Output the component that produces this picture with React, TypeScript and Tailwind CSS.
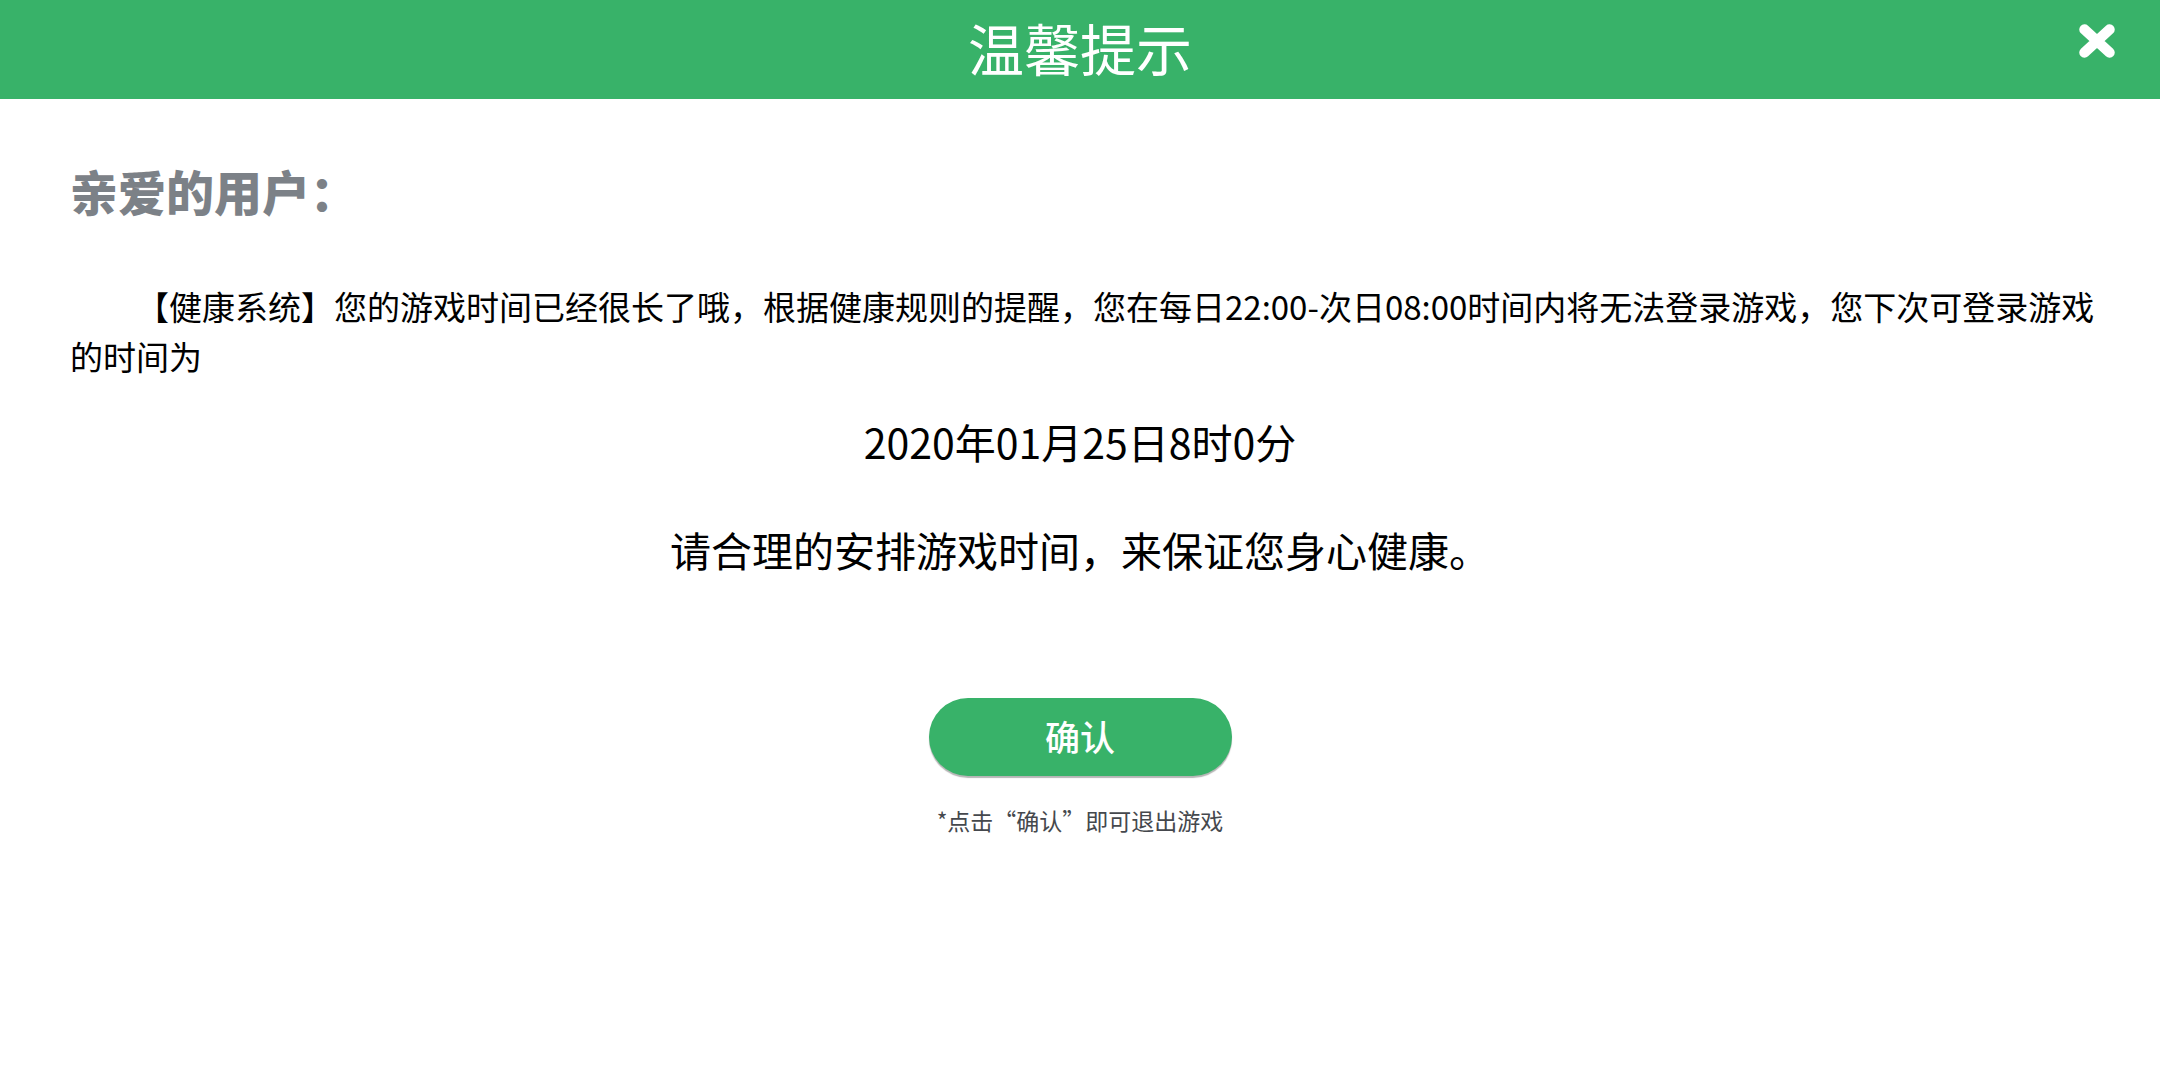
import React from 'react'

const notice = {
  title: '温馨提示',
  greeting: '亲爱的用户：',
  message:
    '【健康系统】您的游戏时间已经很长了哦，根据健康规则的提醒，您在每日22:00-次日08:00时间内将无法登录游戏，您下次可登录游戏的时间为',
  time: '2020年01月25日8时0分',
  advice: '请合理的安排游戏时间，来保证您身心健康。',
  confirm: '确认',
  hint: '*点击“确认”即可退出游戏',
}

const CloseIcon = () => (
  <svg viewBox="0 0 36 34" className="h-[34px] w-9" aria-hidden="true">
    <path
      d="M5.5 5.5 30.5 28.5M30.5 5.5 5.5 28.5"
      fill="none"
      stroke="currentColor"
      strokeWidth="10.5"
      strokeLinecap="round"
    />
  </svg>
)

const Header = () => (
  <header className="relative flex h-[99px] items-start justify-center bg-[#38b269] text-white">
    <h1 className="text-[56px] leading-[94px]">{notice.title}</h1>
    <button type="button" aria-label="关闭" className="absolute top-6 right-[45px] cursor-pointer">
      <CloseIcon />
    </button>
  </header>
)

const App = () => {
  return (
    <div
      lang="zh-CN"
      className="min-h-screen bg-white font-['Noto_Sans_CJK_SC',sans-serif] text-black"
    >
      <Header />

      <main className="flex flex-col pt-14">
        <h2 className="pl-[70px] text-[48px] leading-[70px] font-black text-[#7c8187]">
          {notice.greeting}
        </h2>

        <p className="mt-14 pr-14 pl-[70px] indent-[2em] text-[33px] leading-[50px]">
          {notice.message}
        </p>

        <div className="mt-[30px] flex flex-col items-center gap-12 text-[41px] leading-[60px]">
          <time dateTime="2020-01-25T08:00">{notice.time}</time>
          <p>{notice.advice}</p>
        </div>

        <div className="mt-[119px] flex flex-col items-center">
          <button
            type="button"
            className="h-[78px] w-[303px] cursor-pointer rounded-full bg-[#38b269] pb-0.5 text-[35px] font-medium text-white shadow-[0_2px_1px_#b5b5b5]"
          >
            {notice.confirm}
          </button>
          <p className="mt-7 text-[23px] leading-8 text-[#45484d]">{notice.hint}</p>
        </div>
      </main>
    </div>
  )
}

export default App
